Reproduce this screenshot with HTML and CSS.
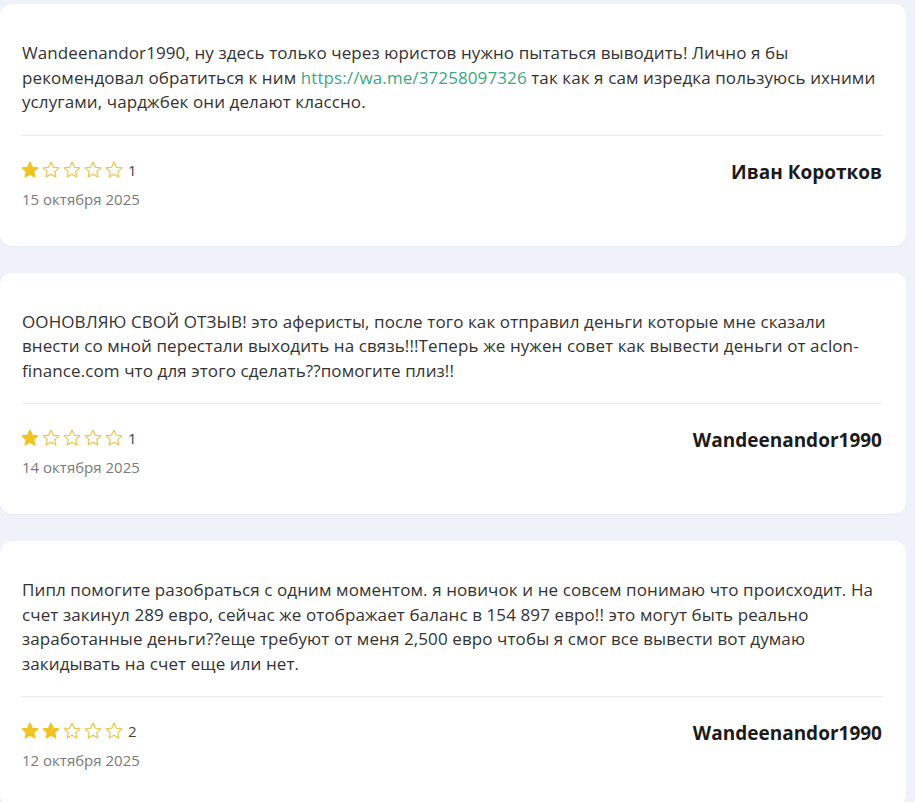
FILE: index.html
```
<!doctype html>
<html>
<head>
<meta charset="UTF-8">
<title>Отзывы</title>
<link rel="stylesheet" href="styles.css">
</head>
<body>
<div class="reviews">
    <div class="review">
        <p class="review-text">Wandeenandor1990, ну здесь только через юристов нужно пытаться выводить! Лично я бы рекомендовал обратиться к ним <a href="#">https://wa.me/37258097326</a> так как я сам изредка пользуюсь ихними услугами, чарджбек они делают классно.</p>
        <div class="review-foot">
            <div class="review-meta">
                <div class="rating">
                    <svg class="star on" viewBox="0 0 24 24"><path d="M12 2.5l2.9 6.2 6.6.7-5 4.5 1.4 6.6L12 17.2l-5.9 3.3 1.4-6.6-5-4.5 6.6-.7z"/></svg>
                    <svg class="star" viewBox="0 0 24 24"><path d="M12 2.5l2.9 6.2 6.6.7-5 4.5 1.4 6.6L12 17.2l-5.9 3.3 1.4-6.6-5-4.5 6.6-.7z"/></svg>
                    <svg class="star" viewBox="0 0 24 24"><path d="M12 2.5l2.9 6.2 6.6.7-5 4.5 1.4 6.6L12 17.2l-5.9 3.3 1.4-6.6-5-4.5 6.6-.7z"/></svg>
                    <svg class="star" viewBox="0 0 24 24"><path d="M12 2.5l2.9 6.2 6.6.7-5 4.5 1.4 6.6L12 17.2l-5.9 3.3 1.4-6.6-5-4.5 6.6-.7z"/></svg>
                    <svg class="star" viewBox="0 0 24 24"><path d="M12 2.5l2.9 6.2 6.6.7-5 4.5 1.4 6.6L12 17.2l-5.9 3.3 1.4-6.6-5-4.5 6.6-.7z"/></svg>
                    <span class="score">1</span>
                </div>
                <div class="date">15 октября 2025</div>
            </div>
            <div class="author">Иван Коротков</div>
        </div>
    </div>

    <div class="review">
        <p class="review-text">ООНОВЛЯЮ СВОЙ ОТЗЫВ! это аферисты, после того как отправил деньги которые мне сказали внести со мной перестали выходить на связь!!!Теперь же нужен совет как вывести деньги от aclon-finance.com что для этого сделать??помогите плиз!!</p>
        <div class="review-foot">
            <div class="review-meta">
                <div class="rating">
                    <svg class="star on" viewBox="0 0 24 24"><path d="M12 2.5l2.9 6.2 6.6.7-5 4.5 1.4 6.6L12 17.2l-5.9 3.3 1.4-6.6-5-4.5 6.6-.7z"/></svg>
                    <svg class="star" viewBox="0 0 24 24"><path d="M12 2.5l2.9 6.2 6.6.7-5 4.5 1.4 6.6L12 17.2l-5.9 3.3 1.4-6.6-5-4.5 6.6-.7z"/></svg>
                    <svg class="star" viewBox="0 0 24 24"><path d="M12 2.5l2.9 6.2 6.6.7-5 4.5 1.4 6.6L12 17.2l-5.9 3.3 1.4-6.6-5-4.5 6.6-.7z"/></svg>
                    <svg class="star" viewBox="0 0 24 24"><path d="M12 2.5l2.9 6.2 6.6.7-5 4.5 1.4 6.6L12 17.2l-5.9 3.3 1.4-6.6-5-4.5 6.6-.7z"/></svg>
                    <svg class="star" viewBox="0 0 24 24"><path d="M12 2.5l2.9 6.2 6.6.7-5 4.5 1.4 6.6L12 17.2l-5.9 3.3 1.4-6.6-5-4.5 6.6-.7z"/></svg>
                    <span class="score">1</span>
                </div>
                <div class="date">14 октября 2025</div>
            </div>
            <div class="author">Wandeenandor1990</div>
        </div>
    </div>

    <div class="review">
        <p class="review-text">Пипл помогите разобраться с одним моментом. я новичок и не совсем понимаю что происходит. На счет закинул 289 евро, сейчас же отображает баланс в 154 897 евро!! это могут быть реально заработанные деньги??еще требуют от меня 2,500 евро чтобы я смог все вывести вот думаю закидывать на счет еще или нет.</p>
        <div class="review-foot">
            <div class="review-meta">
                <div class="rating">
                    <svg class="star on" viewBox="0 0 24 24"><path d="M12 2.5l2.9 6.2 6.6.7-5 4.5 1.4 6.6L12 17.2l-5.9 3.3 1.4-6.6-5-4.5 6.6-.7z"/></svg>
                    <svg class="star on" viewBox="0 0 24 24"><path d="M12 2.5l2.9 6.2 6.6.7-5 4.5 1.4 6.6L12 17.2l-5.9 3.3 1.4-6.6-5-4.5 6.6-.7z"/></svg>
                    <svg class="star" viewBox="0 0 24 24"><path d="M12 2.5l2.9 6.2 6.6.7-5 4.5 1.4 6.6L12 17.2l-5.9 3.3 1.4-6.6-5-4.5 6.6-.7z"/></svg>
                    <svg class="star" viewBox="0 0 24 24"><path d="M12 2.5l2.9 6.2 6.6.7-5 4.5 1.4 6.6L12 17.2l-5.9 3.3 1.4-6.6-5-4.5 6.6-.7z"/></svg>
                    <svg class="star" viewBox="0 0 24 24"><path d="M12 2.5l2.9 6.2 6.6.7-5 4.5 1.4 6.6L12 17.2l-5.9 3.3 1.4-6.6-5-4.5 6.6-.7z"/></svg>
                    <span class="score">2</span>
                </div>
                <div class="date">12 октября 2025</div>
            </div>
            <div class="author">Wandeenandor1990</div>
        </div>
    </div>
</div>
</body>
</html>
```

FILE: styles.css
```
body,div,p{margin:0;padding:0;}
body{background:#eff3f9;font-family:"Open Sans","Noto Sans",sans-serif;color:#333;}
.reviews{display:flex;flex-direction:column;gap:27px;padding:4px 9px 0 0;}
.review{background:#fff;border-radius:12px;padding:37px 24px 37px 22px;box-shadow:0 1px 2px rgba(40,60,100,0.05);}
.review-text{font-size:17px;letter-spacing:0.1px;line-height:24.5px;padding-bottom:20px;border-bottom:1px solid #e9e9ec;}
.review-text a{color:#3aa784;text-decoration:none;}
.review-foot{display:flex;justify-content:space-between;align-items:flex-start;padding-top:24px;}
.rating{display:flex;align-items:center;height:20px;gap:1px;margin-left:-2px;}
.star{width:20px;height:20px;fill:none;stroke:#e8c547;stroke-width:1.4;stroke-linejoin:round;}
.star.on{fill:#f0c320;stroke:#f0c320;}
.score{font-size:15px;color:#444;margin-left:3px;}
.date{margin-top:9px;font-size:15px;line-height:20px;color:#7a7a7a;}
.author{font-size:19px;line-height:24px;font-weight:700;color:#1b1b1b;}
```
